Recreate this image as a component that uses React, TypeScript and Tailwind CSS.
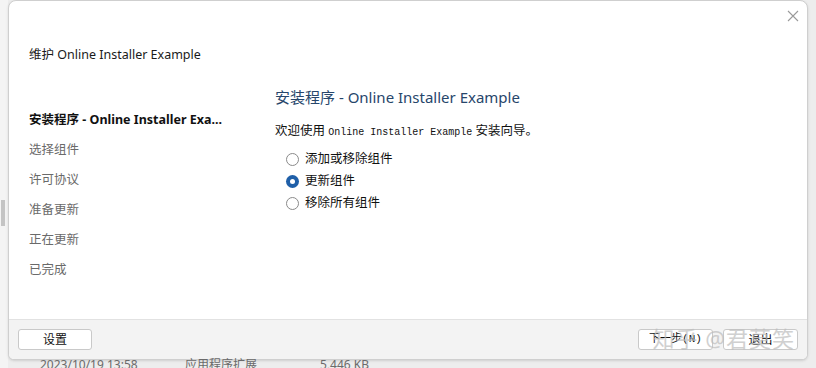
const sans = "font-['Noto_Sans','Noto_Sans_CJK_SC',sans-serif]";

const steps = ['选择组件', '许可协议', '准备更新', '正在更新', '已完成'];

const options = [
  { label: '添加或移除组件', checked: false },
  { label: '更新组件', checked: true },
  { label: '移除所有组件', checked: false },
];

function Radio({ checked }: { checked: boolean }) {
  if (checked) {
    return (
      <span className="flex h-[13px] w-[13px] items-center justify-center rounded-full bg-[#1f5fa8]">
        <span className="h-[5px] w-[5px] rounded-full bg-white"></span>
      </span>
    );
  }
  return <span className="h-[13px] w-[13px] rounded-full border border-[#8a8a8a] bg-white"></span>;
}

export default function App() {
  return (
    <div className={`relative h-[368px] w-[816px] overflow-hidden bg-[#ededed] ${sans}`}>
      {/* explorer strip behind the dialog */}
      <div className="absolute left-0 top-0 h-full w-[8px] bg-[#f4f4f4]">
        <div className="ml-[1px] mt-[200px] h-[26px] w-[4px] bg-[#c4c4c4]"></div>
      </div>

      <div className="absolute left-[8px] top-0 flex h-[360px] w-[800px] flex-col overflow-hidden rounded-t-[8px] rounded-b-[6px] border border-[#cfcfcf] bg-white shadow-sm">
        <div className="relative flex-1">
          <svg className="absolute right-[8px] top-[9px]" width="12" height="12" viewBox="0 0 12 12">
            <path d="M1 1 L11 11 M11 1 L1 11" stroke="#9a9a9a" strokeWidth="1.1" />
          </svg>

          <div className="pl-[20px] pt-[45px] text-[12.5px] text-[#1a1a1a]">维护 Online Installer Example</div>

          <div className="mt-[21px] flex">
            <div className="flex w-[266px] flex-col pl-[20px] pt-[25px] text-[12.5px]">
              <div className="h-[30px] font-bold text-[#111]">安装程序 - Online Installer Exa...</div>
              {steps.map((s) => (
                <div key={s} className="h-[30px] text-[#6a6a6a]">
                  {s}
                </div>
              ))}
            </div>

            <div className="flex flex-col">
              <div className="text-[15px] text-[#27466b]">安装程序 - Online Installer Example</div>
              <div className="mt-[14px] text-[12.5px] text-[#111]">
                欢迎使用 <span className="font-['Liberation_Mono',monospace] text-[10px]">Online Installer Example</span> 安装向导。
              </div>
              <div className="mt-[7px] flex flex-col pl-[11px]">
                {options.map((o) => (
                  <div key={o.label} className="flex h-[22px] items-center gap-[6px] text-[12.5px] text-[#111]">
                    <Radio checked={o.checked} />
                    <span>{o.label}</span>
                  </div>
                ))}
              </div>
            </div>
          </div>
        </div>

        <div className="relative flex h-[40px] items-center justify-between border-t border-[#e2e2e2] bg-[#f3f3f3] px-[9px]">
          <button className="h-[21px] w-[74px] rounded-[3px] border border-[#c9c9c9] bg-white text-[12px] text-[#111]">
            设置
          </button>
          <div className="flex gap-[10px]">
            <button className="h-[21px] w-[75px] rounded-[3px] border border-[#c9c9c9] bg-white font-['Liberation_Mono','Noto_Sans_CJK_SC',monospace] text-[11px] text-[#111]">
              下一步(N)
            </button>
            <button className="h-[21px] w-[75px] rounded-[3px] border border-[#c9c9c9] bg-white text-[12px] text-[#111]">
              退出
            </button>
          </div>
          <div className="pointer-events-none absolute right-[12px] top-[2px] text-[22px] tracking-[1px] text-[#bdbdbd] opacity-70">
            知乎 @君莫笑
          </div>
        </div>
      </div>

      <div className="absolute left-[40px] top-[356px] flex text-[12px] text-[#6a6a6a]">
        <span className="w-[145px]">2023/10/19 13:58</span>
        <span className="w-[135px]">应用程序扩展</span>
        <span>5,446 KB</span>
      </div>
    </div>
  );
}
